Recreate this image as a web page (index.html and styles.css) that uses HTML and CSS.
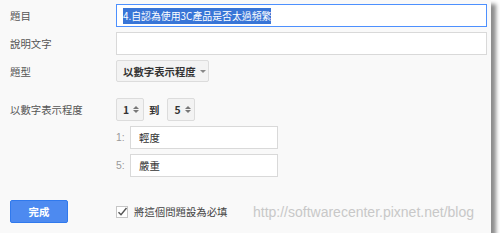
FILE: index.html
```html
<!DOCTYPE html>
<html lang="zh-Hant">
<head>
  <meta charset="UTF-8">
  <title>編輯問題</title>
  <link rel="stylesheet" href="styles.css">
</head>
<body>
  <div class="panel">
    <div class="row">
      <label class="label">題目</label>
      <div class="field field-focus"><span class="selected">4.自認為使用3C產品是否太過頻繁</span></div>
    </div>
    <div class="row row-desc">
      <label class="label">說明文字</label>
      <div class="field"></div>
    </div>
    <div class="row row-type">
      <label class="label">題型</label>
      <div class="dropdown">以數字表示程度 <span class="caret"></span></div>
    </div>

    <div class="row row-scale">
      <label class="label">以數字表示程度</label>
      <div class="scale">
        <div class="spin">1 <span class="arrows"><i class="up"></i><i class="down"></i></span></div>
        <span class="to">到</span>
        <div class="spin">5 <span class="arrows"><i class="up"></i><i class="down"></i></span></div>
      </div>
    </div>
    <div class="ends">
      <div class="end"><span class="num">1:</span><div class="small-field">輕度</div></div>
      <div class="end"><span class="num">5:</span><div class="small-field">嚴重</div></div>
    </div>

    <div class="footer">
      <button class="done">完成</button>
      <div class="required">
        <svg class="check" width="12" height="12" viewBox="0 0 12 12">
          <rect x="0.5" y="0.5" width="11" height="11" fill="#fff" stroke="#c6c6c6"/>
          <path d="M2.5 6.2 L5 8.8 L10.5 2" fill="none" stroke="#555" stroke-width="1.4"/>
        </svg>
        <span>將這個問題設為必填</span>
      </div>
      <span class="watermark">http://softwarecenter.pixnet.net/blog</span>
    </div>
  </div>
</body>
</html>
```

FILE: styles.css
```css
body {
  margin: 0;
  background: #fff;
  font-family: "Noto Sans CJK TC", "Liberation Sans", sans-serif;
  font-size: 10.4px;
  color: #444;
}

.panel {
  width: 481px;
  height: 229px;
  padding: 4px 0 0 10px;
  background: #f9f9f9;
  box-shadow: 5px 4px 4px rgba(0,0,0,0.45);
}

.row {
  display: flex;
  align-items: center;
  height: 23px;
}

.label {
  width: 106px;
  flex: none;
  color: #555;
}

.row-desc {
  margin-top: 5px;
}

.row-type {
  margin-top: 5px;
  height: 22px;
}

.row-scale {
  margin-top: 16px;
}

.field {
  box-sizing: border-box;
  width: 371px;
  height: 23px;
  border: 1px solid #d9d9d9;
  background: #fff;
  display: flex;
  align-items: center;
  padding-left: 6px;
}

.field-focus {
  border: 1px solid #4d90fe;
}

.selected {
  background: #3875d7;
  color: #fff;
  font-size: 9.9px;
  line-height: 16px;
}

.dropdown {
  box-sizing: border-box;
  width: 93px;
  height: 22px;
  border: 1px solid #dcdcdc;
  border-radius: 2px;
  background: #f3f3f3;
  font-weight: bold;
  color: #333;
  white-space: nowrap;
  display: flex;
  align-items: center;
  padding-left: 6px;
}

.caret {
  margin-left: 4px;
  border-left: 3px solid transparent;
  border-right: 3px solid transparent;
  border-top: 3px solid #888;
}

.scale {
  display: flex;
  align-items: center;
}

.spin {
  box-sizing: border-box;
  width: 28px;
  height: 23px;
  border: 1px solid #dcdcdc;
  border-radius: 2px;
  background: #f3f3f3;
  font-weight: bold;
  color: #333;
  display: flex;
  align-items: center;
  padding-left: 6px;
  gap: 4px;
}

.arrows {
  display: flex;
  flex-direction: column;
  gap: 1px;
}

.arrows i {
  display: block;
  border-left: 3px solid transparent;
  border-right: 3px solid transparent;
}

.arrows .up {
  border-bottom: 3px solid #777;
}

.arrows .down {
  border-top: 3px solid #777;
}

.to {
  font-weight: bold;
  color: #333;
  margin: 0 8px 0 5px;
}

.ends {
  margin-left: 106px;
  margin-top: 5px;
  display: flex;
  flex-direction: column;
  gap: 5px;
}

.end {
  display: flex;
  align-items: center;
}

.num {
  width: 14px;
  color: #999;
  font-family: "Liberation Sans", sans-serif;
}

.small-field {
  box-sizing: border-box;
  width: 148px;
  height: 23px;
  border: 1px solid #d9d9d9;
  background: #fff;
  color: #333;
  display: flex;
  align-items: center;
  padding-left: 8px;
}

.footer {
  margin-top: 23px;
  display: flex;
  align-items: center;
  height: 23px;
}

.done {
  width: 58px;
  height: 23px;
  border: 1px solid #3079ed;
  border-radius: 2px;
  background: #4d8af0;
  color: #fff;
  font-family: inherit;
  font-size: 10.4px;
  font-weight: bold;
  padding: 0;
}

.required {
  margin-left: 48px;
  display: flex;
  align-items: center;
  gap: 6px;
  color: #444;
}

.check {
  display: block;
}

.watermark {
  margin-left: auto;
  margin-right: 17px;
  font-family: "Liberation Sans", sans-serif;
  font-size: 14px;
  color: #c8c8c8;
}
```
